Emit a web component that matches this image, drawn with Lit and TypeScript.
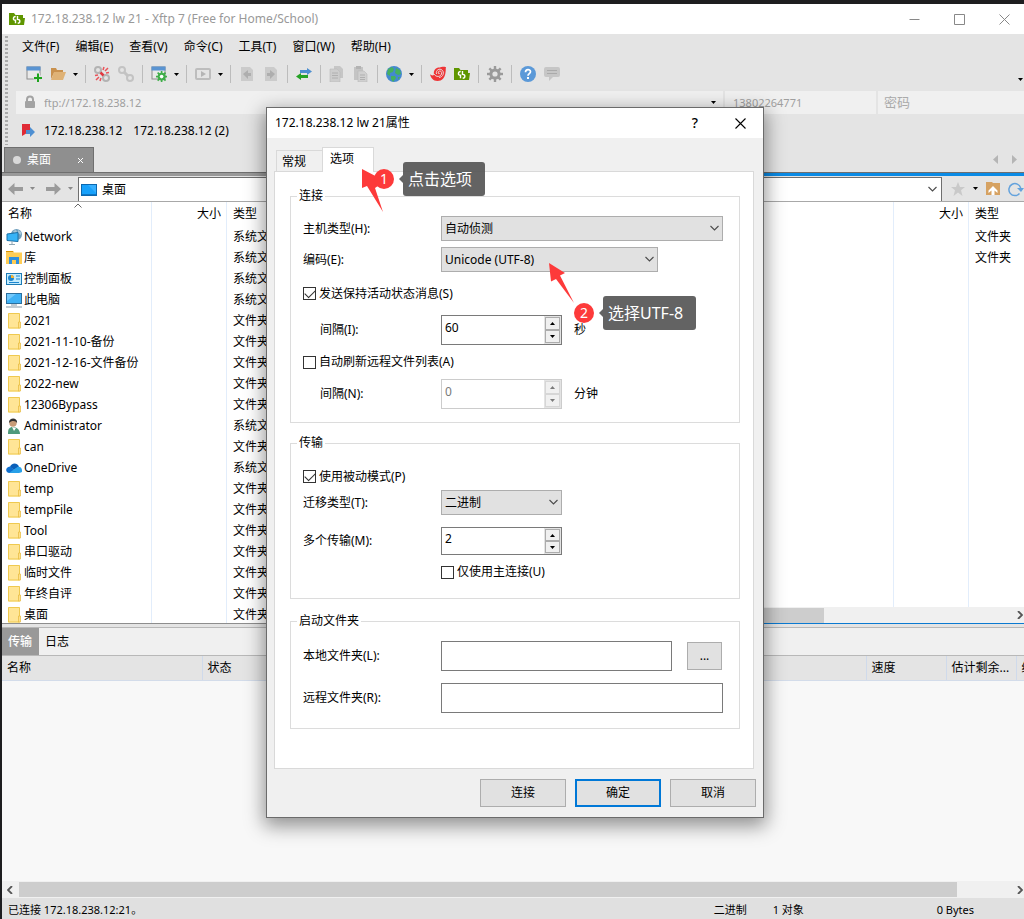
import { LitElement, html, css, svg, nothing } from "lit";
import { customElement, property } from "lit/decorators.js";
import { classMap } from "lit/directives/class-map.js";

type Entry = { name: string; kind: string; icon: string };

const icon = (body: unknown, w = 16, h = 16) =>
  html`<svg class="icon" width=${w} height=${h} viewBox="0 0 ${w} ${h}" aria-hidden="true">${body}</svg>`;

const logoBody = svg`
  <path d="M0 2h5l1.500 2H14v3h2l-1 7H0z" fill="#5f9600"/>
  <path d="M6.500 12.300V9.200c-3 .2-2.600-3.600 .2-3.700M8.500 5v3.400c3.200-.2 3 3.600 .2 3.900" fill="none" stroke="#fff" stroke-width="1.400"/>`;

const gearBody = (c: string, hole: string) => svg`
  <g fill=${c}>
    <rect x="6.800" y="0" width="2.400" height="16"/>
    <rect x="6.800" y="0" width="2.400" height="16" transform="rotate(45 8 8)"/>
    <rect x="6.800" y="0" width="2.400" height="16" transform="rotate(90 8 8)"/>
    <rect x="6.800" y="0" width="2.400" height="16" transform="rotate(135 8 8)"/>
    <circle cx="8" cy="8" r="5.600"/>
  </g><circle cx="8" cy="8" r="2.600" fill=${hole}/>`;

const glyphs: Record<string, unknown> = {
  logo: logoBody,
  create: svg`<rect x="1" y="1" width="13" height="12" fill="#e9e9e9" stroke="#8c8c8c"/><rect x="0.500" y="0.500" width="14" height="4" fill="#5a94d2"/><path d="M12 7v9M7.500 11.500h9" stroke="#e4e4e4" stroke-width="4"/><path d="M12 7.500v8.500M8 12h8" stroke="#1ea41e" stroke-width="2"/>`,
  open: svg`<path d="M1 2h5l1 2h6v3H4L1 13z" fill="#c9914e"/><path d="M4 6h12l-3 8H1z" fill="#dfb276"/>`,
  unlink: svg`<g fill="none" stroke="#b3b3b3" stroke-width="2"><circle cx="4" cy="4" r="3"/><circle cx="12" cy="12" r="3"/></g><path d="M6.500 6.500l3 3" stroke="#e2383f" stroke-width="2.500"/><path d="M9 4l1-3M11 5l3-3M12 7l3-.5M7 12l-1 3M5 11l-3 3M4 9l-3 .5" stroke="#e9535a" stroke-width="1.500"/>`,
  link: svg`<g fill="none" stroke="#c3c3c3" stroke-width="2"><circle cx="4" cy="4" r="3"/><circle cx="12" cy="12" r="3"/><path d="M6 6l4 4" stroke-width="3"/></g>`,
  props: svg`<rect x="1" y="1" width="13" height="12" fill="#e9e9e9" stroke="#8c8c8c"/><rect x="0.500" y="0.500" width="14" height="4" fill="#5a94d2"/><g transform="translate(5 5) scale(.7)">${gearBody("#3fae49", "#fff")}</g>`,
  play: svg`<rect x="1" y="3" width="14" height="10" rx="1" fill="none" stroke="#bdbdbd" stroke-width="2"/><path d="M6 5l5 3-5 3z" fill="#b5b5b5"/>`,
  pageLeft: svg`<path d="M2 1h9l3 3v11H2z" fill="#cbcbcb"/><path d="M4 8l5-4v3h3v3H9v3z" fill="#aeaeae"/>`,
  pageRight: svg`<path d="M2 1h9l3 3v11H2z" fill="#cbcbcb"/><path d="M12 8L7 4v3H4v3h3v3z" fill="#aeaeae"/>`,
  swap: svg`<path d="M4 4h7V2l5 3.500L11 9V7H4z" fill="#4d8fd0"/><path d="M12 9H5V7L0 10.500 5 14v-2h7z" fill="#26a326"/>`,
  copy: svg`<path d="M5 0h6l3 3v9H5z" fill="#c6c6c6"/><path d="M1 3h7l3 3v10H1z" fill="#cdcdcd" stroke="#bbb" stroke-width=".6"/><path d="M3 7h6M3 9.500h6M3 12h6" stroke="#b0b0b0"/>`,
  paste: svg`<path d="M1 1h9v13H1z" fill="#c4c4c4"/><rect x="3" y="0" width="5" height="3" fill="#b3b3b3"/><path d="M5 5h6l3 3v8H5z" fill="#d0d0d0" stroke="#bbb" stroke-width=".6"/><path d="M7 9h5M7 11.500h5M7 13.500h5" stroke="#b0b0b0"/>`,
  globe: svg`<circle cx="8" cy="8" r="8" fill="#4489cf"/><path d="M2 3l4-2 2 2-1 3-3 1v3L1 8zM10 2l4 2 1 4-3 1-3-2zM5 10l4 0 1 2-3 4-2-3zM12 11l2 0-2 3z" fill="#45b060"/>`,
  swirl: svg`<path d="M0 8c1.500 2 3.500 1.500 4 .5C3 3 7 1 10 1.500c0 0 5-1.500 6 0-.5 1 0 2-.5 5C15 11.500 12 15 7.500 15 3 15 .5 11.500 0 8z" fill="#ee3436"/><path d="M4 8c2 3.500 6.500 3 7.500 0S9 4 8.300 6s1.200 2 1.500 1M6.500 8C5.500 4 9.500 2 12 4s1.500 7-3 7.500" fill="none" stroke="#e9e4e4" stroke-width=".9"/>`,
  gear: gearBody("#9a9a9a", "#e4e4e4"),
  help: svg`<circle cx="8" cy="8" r="8" fill="#5b99d8"/><path d="M5.500 6.200c0-3.400 5-3.400 5-.4 0 1.900-2.500 1.800-2.500 4" fill="none" stroke="#fff" stroke-width="1.700"/><rect x="7" y="11" width="2" height="2" fill="#fff"/>`,
  chat: svg`<path d="M2 1h12a2 2 0 0 1 2 2v6a2 2 0 0 1-2 2H9l-4 4v-4H2a2 2 0 0 1-2-2V3a2 2 0 0 1 2-2z" fill="#c6c6c6"/><path d="M3 4.500h10M3 7.500h10" stroke="#aaa"/>`,
  lock: svg`<path d="M5 7V4.500a3 3 0 0 1 6 0V7" fill="none" stroke="#a3a3a3" stroke-width="2"/><rect x="3" y="6" width="10" height="7" rx="1" fill="#a3a3a3"/>`,
  flag: svg`<path d="M1 1h8v6l-3 3-5 3z" fill="#e02b36"/><path d="M5 7h4V4l5 5-5 5v-3H5z" fill="#4e8fd2"/>`,
  back: svg`<path d="M0 8l6.500-6v4H15v4H6.500v4z" fill="#9b9b9b"/>`,
  forward: svg`<path d="M15 8L8.500 2v4H0v4h8.500v4z" fill="#9b9b9b"/>`,
  desktop: svg`<rect x=".5" y="2.500" width="15" height="11" fill="#17a1fb" stroke="#0b68b0"/><path d="M1 13h14M1 3h6l8 8V3z" fill="#38b0ff"/><path d="M1 12.500h14" stroke="#0d76c4"/>`,
  star: svg`<path d="M8 1l2 5h5l-4 3.200L12.500 15 8 11.500 3.500 15 5 9.200 1 6h5z" fill="#c9c9c9"/>`,
  up: svg`<path d="M1 1h6l1 1h7v12H1z" fill="#d6a262"/><path d="M8 5l4.500 4.500V12L9.500 9.500V14h-3V9.500l-3 2.500V9.500z" fill="#fff"/>`,
  refresh: svg`<path d="M11.500 12.500A6 6 0 1 1 12.700 7" fill="none" stroke="#63a2dd" stroke-width="1.500"/><path d="M9 7h7l-3 4z" fill="#63a2dd"/>`,
  folder: svg`<path d="M2 .5h12v15H2z" fill="#ffe596"/><path d="M2.500 .5h11v14.500h-11z" fill="none" stroke="#efc94f"/><path d="M12.500 9h2v6h-2z" fill="#ffe08a" stroke="#e6b93c" stroke-width=".7"/>`,
  network: svg`<circle cx="10.500" cy="5.500" r="5.500" fill="#6f9fbd"/><path d="M7 2l3-1 1 2-2 2zM12 1l3 2v3l-3-2z" fill="#a9c8d9"/><path d="M1 5l11 -1.500v9L1 11.500z" fill="#36b3f6" stroke="#1970a8"/><path d="M6 12v3M3 15.500h6" stroke="#8fa6b4"/>`,
  library: svg`<path d="M0 1h7l1 1.500H0z" fill="#d99300"/><path d="M0 2.500h16V14H0z" fill="#ffcd55"/><path d="M3 14V7h10v7h-3v-4H6v4z" fill="#2f8fe0"/>`,
  control: svg`<rect x=".5" y="2.500" width="15" height="11" fill="#c5ecfd" stroke="#1c7bb5"/><circle cx="5" cy="7" r="3" fill="#1d86cf"/><path d="M5 7V4a3 3 0 0 1 3 3z" fill="#ffb52b"/><path d="M10 5h4M10 8h4M3 11.500h10" stroke="#1d86cf" stroke-width="1.200"/>`,
  pc: svg`<rect x=".5" y="1.500" width="15" height="10" fill="#3fb1f5" stroke="#2b6f9e"/><path d="M1 2h9L1 9z" fill="#72c8fb"/><path d="M5 13h6M0 15h16" stroke="#8497a5"/>`,
  user: svg`<path d="M2 16c0-5 1-7 5-7s7 3 7 7z" fill="#4f9a7b"/><path d="M6 9l2 4 2-3z" fill="#fff"/><circle cx="7" cy="5" r="3.700" fill="#c79b77"/><path d="M3 5c-.5-6 9-6 8 0-1-2-5-3-8 0z" fill="#2f2f31"/>`,
  cloud: svg`<path d="M4 7c1-4 7-5 9-.5L8 10z" fill="#0a5fb8"/><path d="M3.500 13C-1 13-1 7 4 6.500l8 6.500z" fill="#0f6fcf"/><path d="M3 13l7-5c3-3 6 0 6 2 1 2-1 3-3 3z" fill="#28a0e8"/>`,
};

const get = (name: string) => icon(glyphs[name]);
const caret = html`<svg class="icon" width="5" height="3" viewBox="0 0 5 3" aria-hidden="true"><path d="M0 0h5L2.500 3z" fill="currentColor"/></svg>`;
const chevron = html`<svg class="chevron" width="11" height="7" viewBox="0 0 11 7" aria-hidden="true"><path d="M1.500 1l4 4 4-4" fill="none" stroke="#4b4b4b" stroke-width="1.100"/></svg>`;

const SYS = "系统文件夹";
const DIR = "文件夹";
const localFiles: Entry[] = [
  { name: "Network", kind: SYS, icon: "network" },
  { name: "库", kind: SYS, icon: "library" },
  { name: "控制面板", kind: SYS, icon: "control" },
  { name: "此电脑", kind: SYS, icon: "pc" },
  { name: "2021", kind: DIR, icon: "folder" },
  { name: "2021-11-10-备份", kind: DIR, icon: "folder" },
  { name: "2021-12-16-文件备份", kind: DIR, icon: "folder" },
  { name: "2022-new", kind: DIR, icon: "folder" },
  { name: "12306Bypass", kind: DIR, icon: "folder" },
  { name: "Administrator", kind: SYS, icon: "user" },
  { name: "can", kind: DIR, icon: "folder" },
  { name: "OneDrive", kind: SYS, icon: "cloud" },
  { name: "temp", kind: DIR, icon: "folder" },
  { name: "tempFile", kind: DIR, icon: "folder" },
  { name: "Tool", kind: DIR, icon: "folder" },
  { name: "串口驱动", kind: DIR, icon: "folder" },
  { name: "临时文件", kind: DIR, icon: "folder" },
  { name: "年终自评", kind: DIR, icon: "folder" },
  { name: "桌面", kind: DIR, icon: "folder" },
];
const remoteFiles: Entry[] = [
  { name: "", kind: DIR, icon: "" },
  { name: "", kind: DIR, icon: "" },
];

const menus = ["文件(F)", "编辑(E)", "查看(V)", "命令(C)", "工具(T)", "窗口(W)", "帮助(H)"];
const tools = [
  "create", "open", "v", "|", "unlink", "link", "|", "props", "v", "|", "play", "v", "|",
  "pageLeft", "pageRight", "|", "swap", "|", "copy", "paste", "|", "globe", "v", "|",
  "swirl", "logo", "|", "gear", "|", "help", "chat",
];

const base = css`
  * { box-sizing: border-box; }
  button, input, select { font: inherit; color: inherit; margin: 0; border-radius: 0; outline: none; }
  button { padding: 0; border: 0; background: none; cursor: default; }
  .icon { display: block; flex: none; }
`;

@customElement("properties-dialog")
export class PropertiesDialog extends LitElement {
  static styles = [base, css`
    :host { display: block; background: #f0f0f0; border: 1px solid #6b6b6b; box-shadow: 0 6px 18px 2px rgba(0,0,0,.42); color: #000; }
    .title { display: flex; align-items: center; height: 30px; padding: 0 15px 0 8px; background: #fff; }
    .title h1 { flex: 1; margin: 0; font-size: 12px; font-weight: 400; }
    .title button { width: 16px; height: 20px; display: grid; place-items: center; font-size: 14px; font-weight: 500; }
    .title-buttons { display: flex; gap: 29px; }
    .body { padding: 9px 9px 10px 7px; }
    .tabs { display: flex; align-items: flex-end; padding-left: 2px; height: 25px; }
    .tab { height: 22px; width: 46px; padding-left: 5px; text-align: left; border: 1px solid #d9d9d9; border-width: 1px 0 0 1px; }
    .tab.active { height: 25px; width: 52px; padding: 0 0 2px 7px; background: #fff; border-right-width: 1px; position: relative; }
    .panel { margin-top: -1px; padding: 16px 13px 39px 15px; background: #fff; border: 1px solid #d9d9d9; }
    fieldset { min-width: 0; margin: 0; padding: 0; border: 1px solid #dcdcdc; }
    fieldset + fieldset { margin-top: 12px; }
    fieldset:last-child { margin-top: 14px; }
    legend { margin-left: 6px; padding: 0 2px; line-height: 16px; }
    .fields { padding: 12px 16px 13px 12px; }
    .fields.transfer { padding-bottom: 9px; }
    .fields.start { padding-bottom: 15px; }
    .row { display: flex; align-items: center; }
    .row > label:first-child, .row > .pad { width: 138px; flex: none; }
    .row > label.sub:first-child { padding-left: 17px; }
    .unit { margin-left: 12px; }
    .gap { margin-top: 6px; }
    .gap-lg { margin-top: 12px; }
    .check { display: flex; align-items: center; gap: 3px; height: 34px; }
    .check.tall { height: 43px; }
    .check.low { height: 27px; }
    input[type="checkbox"] { appearance: none; width: 13px; height: 13px; border: 1px solid #333; background: #fff; display: grid; place-items: center; }
    input[type="checkbox"]:checked::before { content: ""; width: 9px; height: 5px; border: solid #333; border-width: 0 0 1px 1px; transform: rotate(-45deg) translate(1px, -1px); }
    .combo { display: grid; align-items: center; flex: 0 1 121px; }
    .combo.full { flex-basis: 282px; }
    .combo.mid { flex-basis: 217px; }
    .combo > * { grid-area: 1 / 1; }
    .combo select { appearance: none; width: 100%; height: 25px; padding: 0 20px 0 3px; background: #e1e1e1; border: 1px solid #adadad; }
    .chevron { justify-self: end; margin-right: 3px; pointer-events: none; }
    .spin { display: flex; width: 121px; height: 30px; border: 1px solid #7a7a7a; background: #fff; }
    .spin.short { height: 28px; }
    .spin input { flex: 1; min-width: 0; border: 0; padding: 0 3px 5px; background: none; }
    .arrows { display: flex; flex-direction: column; width: 17px; padding: 1px; background: #e3e3e3; }
    .arrows button { flex: 1; display: grid; place-items: center; border: 1px solid #acacac; background: #f0f0f0; }
    .arrows .flip { transform: rotate(180deg); }
    .spin.off { border-color: #ccc; color: #7a7a7a; }
    .spin.off .arrows button { border-color: #d6d6d6; }
    .path { height: 30px; width: 282px; border: 1px solid #7a7a7a; background: #fff; padding: 0 4px; }
    .path.with-button { width: 231px; margin-right: 15px; }
    .push { height: 28px; width: 86px; background: #e1e1e1; border: 1px solid #adadad; }
    .push.browse { width: 35px; }
    .push.default { border: 2px solid #0078d7; }
    .actions { display: flex; justify-content: flex-end; gap: 9px; padding-top: 10px; margin-right: -2px; }
    .note { position: absolute; display: flex; align-items: center; gap: 9px; left: 107px; top: 54px; }
    .note.second { left: 307px; top: 188px; }
    .badge { display: grid; place-items: center; width: 20px; height: 20px; border-radius: 50%; background: #fd3a3a; color: #fff; font-size: 14px; z-index: 1; }
    .callout { position: relative; height: 34px; line-height: 34px; padding: 0 13px 0 5px; border-radius: 3px; background: rgba(82,82,82,.9); color: #fff; font-size: 16px; white-space: nowrap; }
    .callout::before { content: ""; position: absolute; right: 100%; top: 13px; border: 4px solid transparent; border-right-color: rgba(82,82,82,.9); border-left: 0; }
    .pointer { position: absolute; left: -12px; top: 7px; }
    .second .pointer { left: -25px; top: -33px; }
  `];

  private spinner(id: string, value: string, opts: { off?: boolean; short?: boolean } = {}) {
    const tri = (flip: boolean) => html`<svg class=${flip ? "flip" : ""} width="5" height="3" viewBox="0 0 5 3"><path d="M0 0h5L2.500 3z" fill="currentColor"/></svg>`;
    return html`<div class=${classMap({ spin: true, off: !!opts.off, short: !!opts.short })}>
      <input id=${id} type="text" inputmode="numeric" .value=${value} ?disabled=${opts.off} />
      <div class="arrows">
        <button aria-label="增加" ?disabled=${opts.off}>${tri(true)}</button>
        <button aria-label="减少" ?disabled=${opts.off}>${tri(false)}</button>
      </div>
    </div>`;
  }

  private combo(id: string, value: string, size = "") {
    return html`<div class="combo ${size}"><select id=${id}><option>${value}</option></select>${chevron}</div>`;
  }

  render() {
    return html`
      <header class="title">
        <h1>172.18.238.12 lw 21属性</h1>
        <div class="title-buttons">
          <button aria-label="帮助">?</button>
          <button aria-label="关闭"><svg width="11" height="11" viewBox="0 0 11 11"><path d="M.5 .5l10 10M10.500 .5l-10 10" stroke="#000" stroke-width="1.100"/></svg></button>
        </div>
      </header>
      <div class="body">
        <div class="tabs" role="tablist">
          <button class="tab" role="tab">常规</button>
          <button class="tab active" role="tab" aria-selected="true">选项</button>
        </div>
        <div class="panel">
          <fieldset>
            <legend>连接</legend>
            <div class="fields">
              <div class="row"><label for="host">主机类型(H):</label>${this.combo("host", "自动侦测", "full")}</div>
              <div class="row gap"><label for="enc">编码(E):</label>${this.combo("enc", "Unicode (UTF-8)", "mid")}</div>
              <label class="check tall"><input type="checkbox" checked />发送保持活动状态消息(S)</label>
              <div class="row"><label class="sub" for="keep">间隔(I):</label>${this.spinner("keep", "60")}<span class="unit">秒</span></div>
              <label class="check"><input type="checkbox" />自动刷新远程文件列表(A)</label>
              <div class="row"><label class="sub" for="refresh">间隔(N):</label>${this.spinner("refresh", "0", { off: true })}<span class="unit">分钟</span></div>
            </div>
          </fieldset>
          <fieldset>
            <legend>传输</legend>
            <div class="fields transfer">
              <label class="check low"><input type="checkbox" checked />使用被动模式(P)</label>
              <div class="row"><label for="type">迁移类型(T):</label>${this.combo("type", "二进制")}</div>
              <div class="row gap-lg"><label for="multi">多个传输(M):</label>${this.spinner("multi", "2", { short: true })}</div>
              <div class="row"><span class="pad"></span><label class="check"><input type="checkbox" />仅使用主连接(U)</label></div>
            </div>
          </fieldset>
          <fieldset>
            <legend>启动文件夹</legend>
            <div class="fields start">
              <div class="row"><label for="local">本地文件夹(L):</label><input id="local" class="path with-button" type="text" /><button class="push browse">...</button></div>
              <div class="row gap-lg"><label for="remote">远程文件夹(R):</label><input id="remote" class="path" type="text" /></div>
            </div>
          </fieldset>
        </div>
        <footer class="actions">
          <button class="push">连接</button>
          <button class="push default">确定</button>
          <button class="push">取消</button>
        </footer>
      </div>
      <div class="note">
        <svg class="pointer" width="26" height="44" viewBox="0 0 26 44"><path d="M0 0L23 12 13 19 21 43 5 17 0 19z" fill="#fd3a3a"/></svg>
        <span class="badge">1</span><span class="callout">点击选项</span>
      </div>
      <div class="note second">
        <svg class="pointer" width="26" height="40" viewBox="0 0 26 40"><path d="M0 0L16 10 11 12.500 25 40 7 16 2 18.500z" fill="#fd3a3a"/></svg>
        <span class="badge">2</span><span class="callout">选择UTF-8</span>
      </div>`;
  }
}

@customElement("file-pane")
export class FilePane extends LitElement {
  @property({ attribute: false }) files: Entry[] = [];
  @property({ type: Boolean, reflect: true }) remote = false;

  static styles = [base, css`
    :host { display: flex; flex-direction: column; min-width: 0; border-bottom: 1px solid #8d8d8d; }
    :host([remote]) { border-bottom-color: #0b7ad1; }
    .tabs { display: flex; align-items: flex-end; height: 25px; padding: 0 0 0 2px; background: #e4e4e4; }
    .tab { display: flex; align-items: center; width: 90px; height: 25px; padding: 0 10px 0 8px; gap: 6px; background: #8f8f8f; border: 1px solid #6f6f6f; border-bottom: 0; color: #fff; }
    .tab b { width: 8px; height: 8px; border-radius: 50%; background: #d9d9d9; }
    .tab span { flex: 1; text-align: left; }
    .scrollers { margin-left: auto; display: flex; gap: 14px; padding: 0 7px 8px 0; color: #b5b5b5; }
    .accent { height: 4px; background: #999; border-top: 1px solid #6f6f6f; }
    :host([remote]) .accent { background: #0a8be6; }
    .nav { display: flex; align-items: center; height: 26px; padding: 1px 0 1px 6px; background: #e4e4e4; border-bottom: 1px solid #a8a8a8; overflow: hidden; }
    .arrow { display: flex; align-items: center; gap: 6px; padding-right: 11px; color: #8a8a8a; }
    .arrow + .arrow { padding-right: 5px; }
    .place { flex: 1; display: flex; align-items: center; gap: 5px; min-width: 0; height: 24px; padding: 1px 3px 0 2px; background: #fff; border: solid #6f6f6f; border-width: 1px 1px 0; }
    .place input { flex: 1; min-width: 0; border: 0; padding: 0; background: none; }
    .side { display: flex; align-items: center; gap: 7px; padding-left: 8px; color: #000; }
    .list { position: relative; flex: 1; background: linear-gradient(#e2edfb, #e2edfb) 149px 0 / 1px 100% no-repeat, linear-gradient(#e2edfb, #e2edfb) 224px 0 / 1px 100% no-repeat, #fff; overflow: hidden; }
    .sort { position: absolute; left: 72px; top: 1px; }
    :host([remote]) .list { background: linear-gradient(#e2edfb, #e2edfb) right 130px top / 1px 100% no-repeat, linear-gradient(#e2edfb, #e2edfb) right 55px top / 1px 100% no-repeat, #fff; }
    table { width: 100%; table-layout: fixed; border-collapse: collapse; }
    th, td { padding: 0; font-weight: 400; text-align: left; white-space: nowrap; }
    th { height: 22px; padding: 1px 6px 0 6px; }
    th.size { text-align: right; }
    th.name { width: 150px; }
    th.size { width: 75px; }
    :host([remote]) th.name { width: auto; }
    :host([remote]) th.type { width: 55px; }
    td { height: 21px; padding: 4px 0 0 6px; line-height: 17px; overflow: hidden; }
    td:first-child { padding-left: 4px; }
    .file { display: flex; align-items: center; gap: 2px; height: 17px; }
    .bar { display: flex; align-items: center; height: 16px; padding: 0 1px 0 17px; background: #f0f0f0; }
    .thumb { height: 15px; width: 294px; background: #cdcdcd; }
    .bar svg { margin-left: auto; }
  `];

  render() {
    return html`
      <div class="tabs">
        ${this.remote
          ? html`<div class="scrollers">
              <svg width="5" height="9" viewBox="0 0 5 9"><path d="M5 0v9L0 4.500z" fill="currentColor"/></svg>
              <svg width="5" height="9" viewBox="0 0 5 9"><path d="M0 0v9l5-4.500z" fill="currentColor"/></svg></div>`
          : html`<button class="tab"><b></b><span>桌面</span><svg width="5" height="5" viewBox="0 0 5 5"><path d="M0 0l5 5M5 0L0 5" stroke="#fff"/></svg></button>`}
      </div>
      <div class="accent"></div>
      <div class="nav">
        <button class="arrow" aria-label="后退">${get("back")}${caret}</button>
        <button class="arrow" aria-label="前进">${get("forward")}${caret}</button>
        <div class="place">${this.remote ? nothing : get("desktop")}<input aria-label="路径" .value=${this.remote ? "" : "桌面"} />${chevron}</div>
        ${this.remote ? html`<div class="side">${get("star")}${caret}${get("up")}${get("refresh")}</div>` : nothing}
      </div>
      <div class="list">
        ${this.remote ? nothing : html`<svg class="sort" width="8" height="5" viewBox="0 0 8 5"><path d="M.5 4.500L4 1l3.500 3.500" fill="none" stroke="#666"/></svg>`}
        <table>
          <thead><tr><th class="name">${this.remote ? "" : "名称"}</th><th class="size">大小</th><th class="type">类型</th></tr></thead>
          <tbody>
            ${this.files.map((f) => html`<tr>
              <td>${f.name ? html`<div class="file">${get(f.icon)}<span>${f.name}</span></div>` : nothing}</td>
              <td></td><td>${f.kind}</td></tr>`)}
          </tbody>
        </table>
      </div>
      ${this.remote
        ? html`<div class="bar"><div class="thumb"></div><svg width="6" height="8" viewBox="0 0 6 8"><path d="M1 0l4 4-4 4" fill="none" stroke="#555" stroke-width="1.800"/></svg></div>`
        : nothing}`;
  }
}

@customElement("app-root")
export class AppRoot extends LitElement {
  static styles = [base, css`
    :host { display: block; position: relative; min-height: 100vh; overflow: hidden; background: #1e1e20; padding: 4px 0 0 2px; font: 12px/16px "Noto Sans", "Noto Sans CJK SC", sans-serif; color: #000; }
    .window { display: flex; flex-direction: column; min-height: calc(100vh - 4px); background: #e4e4e4; }
    .titlebar { display: flex; align-items: center; height: 30px; padding: 0 14px 0 7px; gap: 6px; background: #fff; color: #999; }
    .titlebar h1 { flex: 1; margin: 0; font-size: 12px; font-weight: 400; }
    .titlebar button { width: 11px; height: 11px; }
    .titlebar button svg { display: block; }
    .win { display: flex; gap: 34px; }
    .chrome { display: flex; padding-left: 3px; }
    .grip { width: 3px; margin: 2px 0; background: repeating-linear-gradient(#aaa 0 2px, #e4e4e4 2px 4px); }
    .bars { flex: 1; min-width: 0; }
    .menu { display: flex; height: 25px; align-items: center; padding-left: 6px; }
    .menu button { padding: 0 8px; height: 20px; }
    .toolbar { display: flex; height: 32px; align-items: center; padding: 0 0 2px 14px; }
    .toolbar .tool { width: 24px; height: 24px; display: grid; place-items: center; }
    .toolbar .drop { width: 11px; height: 24px; display: grid; place-items: center; }
    .sep { width: 1px; height: 18px; margin: 0 4px; background: #bcbcbc; }
    .more { margin: 10px 1px 0 auto; }
    .address { display: flex; gap: 2px; height: 23px; padding-left: 8px; font-size: 11px; color: #9f9f9f; }
    .cell { display: flex; align-items: center; gap: 6px; padding: 0 8px; background: #f0f0f0; width: 151px; }
    .cell.url { flex: 1; padding: 0 7px 0 6px; }
    .cell.pass { width: 146px; padding-left: 6px; font-size: 12px; }
    .cell input { flex: 1; min-width: 0; border: 0; padding: 0; background: none; }
    .cell input::placeholder { color: #aaa; opacity: 1; font-size: 13px; }
    .cell .icon { color: #000; }
    .links { display: flex; align-items: center; gap: 11px; height: 33px; padding-left: 13px; }
    .links a { color: inherit; text-decoration: none; }
    .links a:first-of-type { margin-left: -4px; }
    .panes { display: grid; grid-template-columns: 1fr 1fr; }
    .queue { flex: 1; display: flex; flex-direction: column; margin-top: 3px; border-top: 1px solid #b8b8b8; background: #f8f8f8; }
    .qtabs { display: flex; height: 28px; background: #f0f0f0; border-bottom: 1px solid #b8b8b8; }
    .qtabs button { padding: 0 7px 0 6px; }
    .qtabs .on { background: #999; color: #fff; font-weight: 500; }
    table { width: 100%; table-layout: fixed; border-collapse: collapse; }
    th { height: 24px; padding: 0 0 0 5px; font-weight: 400; text-align: left; white-space: nowrap; overflow: hidden; background: #e4e4e4; border-bottom: 1px solid #d3dcea; border-right: 1px solid #cfdaeb; }
    th.c200 { width: 200px; } th.c80 { width: 80px; } th.c70 { width: 70px; } th.c8 { width: 8px; border-right: 0; }
    .hscroll { display: flex; align-items: center; justify-content: space-between; height: 17px; margin-top: auto; padding: 0 1px 0 5px; background: #f0f0f0; }
    .hthumb { flex: 1; margin: 0 60px 0 6px; height: 15px; background: #cdcdcd; }
    .status { display: flex; align-items: center; height: 21px; padding: 2px 50px 0 6px; background: #e0e0e0; font-size: 11px; }
    .status .msg { flex: 1; } .status .mode { width: 59px; } .status .count { width: 164px; }
    properties-dialog { position: absolute; left: 266px; top: 107px; width: 498px; }
  `];

  render() {
    return html`
      <main class="window">
        <header class="titlebar">
          ${get("logo")}
          <h1>172.18.238.12 lw 21 - Xftp 7 (Free for Home/School)</h1>
          <div class="win">
            <button aria-label="最小化"><svg width="11" height="11" viewBox="0 0 11 11"><path d="M.5 5.500h10" stroke="#888"/></svg></button>
            <button aria-label="最大化"><svg width="11" height="11" viewBox="0 0 11 11"><path d="M.5 .5h10v10H.5z" fill="none" stroke="#888"/></svg></button>
            <button aria-label="关闭"><svg width="11" height="11" viewBox="0 0 11 11"><path d="M.5 .5l10 10M10.500 .5l-10 10" stroke="#888"/></svg></button>
          </div>
        </header>
        <div class="chrome">
          <div class="grip"></div>
          <div class="bars">
            <nav class="menu">${menus.map((m) => html`<button>${m}</button>`)}</nav>
            <div class="toolbar">
              ${tools.map((t) =>
                t === "|" ? html`<span class="sep"></span>`
                : t === "v" ? html`<button class="drop" aria-label="更多">${caret}</button>`
                : html`<button class="tool" aria-label=${t}>${get(t)}</button>`)}
              <span class="more">${caret}</span>
            </div>
            <div class="address">
              <div class="cell url">${get("lock")}<input aria-label="地址" .value=${"ftp://172.18.238.12"} />${caret}</div>
              <div class="cell"><input aria-label="用户名" .value=${"13802264771"} /></div>
              <div class="cell pass"><input aria-label="密码" type="password" placeholder="密码" /></div>
            </div>
            <div class="links">${get("flag")}<a href="#">172.18.238.12</a><a href="#">172.18.238.12 (2)</a></div>
          </div>
        </div>
        <section class="panes">
          <file-pane .files=${localFiles}></file-pane>
          <file-pane remote .files=${remoteFiles}></file-pane>
        </section>
        <section class="queue">
          <div class="qtabs"><button class="on">传输</button><button>日志</button></div>
          <table><thead><tr><th class="c200">名称</th><th>状态</th><th class="c80">速度</th><th class="c70">估计剩余...</th><th class="c8">经过时间</th></tr></thead></table>
          <div class="hscroll">
            <svg width="6" height="8" viewBox="0 0 6 8"><path d="M5 0L1 4l4 4" fill="none" stroke="#555" stroke-width="1.800"/></svg>
            <div class="hthumb"></div>
            <svg width="6" height="8" viewBox="0 0 6 8"><path d="M1 0l4 4-4 4" fill="none" stroke="#555" stroke-width="1.800"/></svg>
          </div>
        </section>
        <footer class="status"><span class="msg">已连接 172.18.238.12:21。</span><span class="mode">二进制</span><span class="count">1 对象</span><span>0 Bytes</span></footer>
      </main>
      <properties-dialog></properties-dialog>`;
  }
}
